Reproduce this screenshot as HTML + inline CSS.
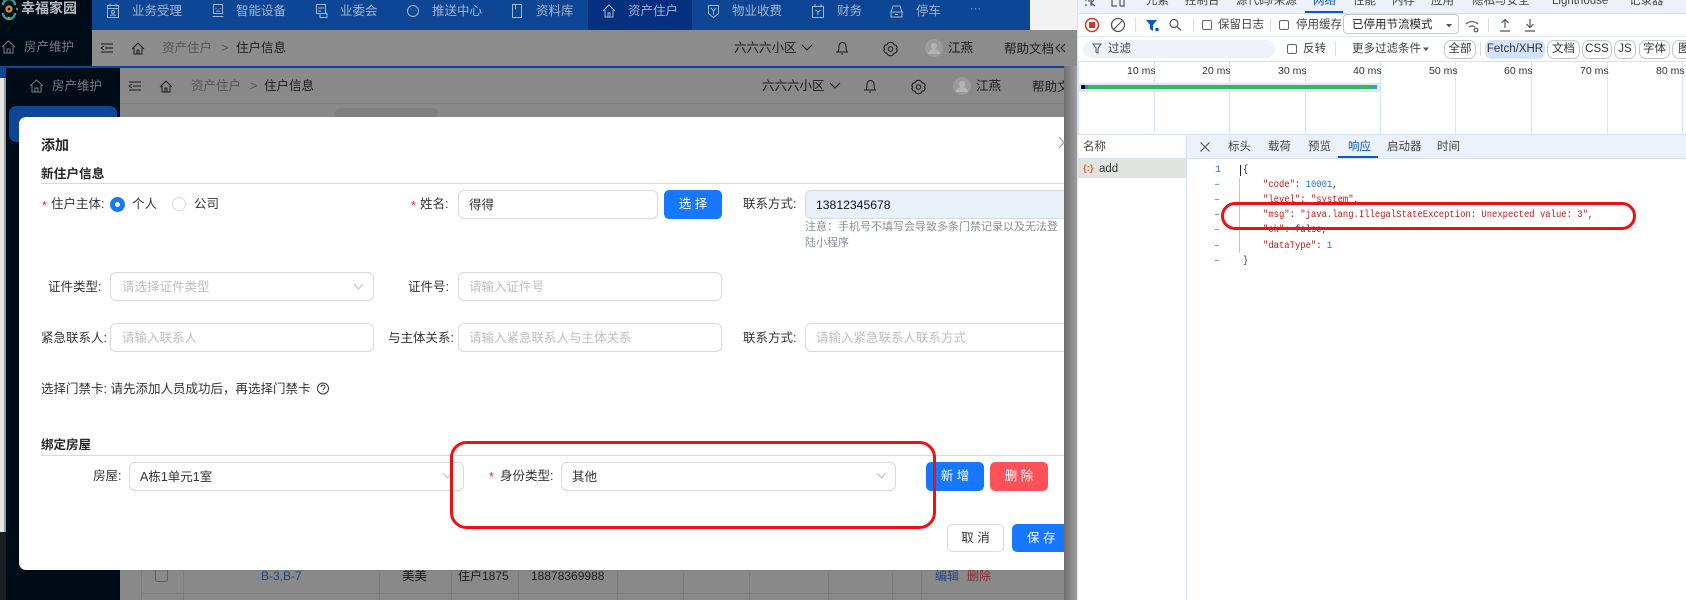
<!DOCTYPE html>
<html lang="zh"><head><meta charset="utf-8"><title>住户信息</title>
<style>
html,body{margin:0;padding:0;width:1686px;height:600px;overflow:hidden;background:#fff}
body{position:relative;font-family:"Liberation Sans","Noto Sans CJK SC",sans-serif;font-size:12.5px;color:#333}
div,span.t{box-sizing:border-box}
.b{position:absolute}
.t{position:absolute;white-space:nowrap;line-height:20px}
.nav{color:#a3b5cf;font-size:12.5px}
.h{color:#1c1c1c;font-size:12.5px}
.g{color:#555}
.f{color:#333}
.p{color:#bfbfbf}
.r{color:#f5222d}
.inp{position:absolute;border:1px solid #d9d9d9;border-radius:6px;background:#fff;height:29px}
.btn{position:absolute;border-radius:5px;color:#fff;text-align:center;line-height:29px;height:29px;font-size:12.5px}
.d{font-size:11.5px;color:#444}
.blue{color:#0b57d0}
.chip{position:absolute;top:40px;height:19px;border:1px solid #c4c7c5;border-radius:7px;text-align:center;line-height:17px;font-size:11.5px;color:#333;background:#fff}
.vl{position:absolute;top:62px;height:72px;width:1px;background:#d3e3fd}
.sep{position:absolute;width:1px;height:14px;background:#d6dde8}
.m{position:absolute;font-family:"Liberation Mono",monospace;font-size:8.9px;line-height:15px;white-space:pre;color:#c41a16;transform:scaleY(1.14)}
.ln{position:absolute;left:1214px;font-family:"Liberation Mono",monospace;font-size:10px;line-height:15px;color:#2a6fc9}
.cb{position:absolute;width:10px;height:10px;border:1px solid #666;border-radius:2px;background:#fff}
</style></head><body>

<!-- back layer -->
<div class="b" style="left:0;top:0;width:1077px;height:600px;background:#f2f2f2"></div>
<div class="b" style="left:0;top:0;width:92px;height:66px;background:#000c17"></div>
<div class="b" style="left:92px;top:0;width:938px;height:30px;background:#0c4694"></div>
<div class="b" style="left:588px;top:0;width:104px;height:30px;background:#04307f"></div>
<div class="b" style="left:92px;top:30px;width:985px;height:36px;background:#8c8c8c"></div>
<div class="b" style="left:0;top:66px;width:6px;height:12px;background:#0c4694"></div>
<div class="b" style="left:0;top:78px;width:4px;height:454px;background:#e6e6e6"></div>
<div class="b" style="left:4px;top:78px;width:2px;height:454px;background:#9a9a9a"></div>
<div class="b" style="left:0;top:532px;width:6px;height:68px;background:#1a1f26"></div>
<div class="t" style="left:21px;top:-2px;font-size:14px;font-weight:700;color:#b5b9bd">幸福家园</div>
<div class="t nav" style="left:132px;top:1px">业务受理</div>
<div class="t nav" style="left:236px;top:1px">智能设备</div>
<div class="t nav" style="left:340px;top:1px">业委会</div>
<div class="t nav" style="left:432px;top:1px">推送中心</div>
<div class="t nav" style="left:536px;top:1px">资料库</div>
<div class="t nav" style="left:628px;top:1px">资产住户</div>
<div class="t nav" style="left:732px;top:1px">物业收费</div>
<div class="t nav" style="left:837px;top:1px">财务</div>
<div class="t nav" style="left:916px;top:1px">停车</div>
<div class="t nav" style="left:970px;top:-1px;font-size:11px">···</div>
<div class="t" style="left:24px;top:37px;color:#777b80">房产维护</div>
<div class="t g" style="left:162px;top:38px">资产住户</div>
<div class="t g" style="left:221px;top:38px">&gt;</div>
<div class="t h" style="left:236px;top:38px">住户信息</div>
<div class="t h" style="left:734px;top:38px">六六六小区</div>
<div class="t h" style="left:948px;top:38px">江燕</div>
<div class="t h" style="left:1004px;top:39px">帮助文档</div>

<!-- shadow -->
<div class="b" style="left:1064px;top:66px;width:13px;height:534px;background:linear-gradient(90deg,#6f6f6f,#8a8a8a 60%,#a0a0a0)"></div>

<!-- inner window -->
<div class="b" style="left:6px;top:66px;width:1058px;height:534px;background:#898989;overflow:hidden">
  <div class="b" style="left:0;top:0;width:1058px;height:2px;background:#0c4694"></div>
  <div class="b" style="left:0;top:2px;width:114px;height:532px;background:#000c17"></div>
  <div class="b" style="left:114px;top:37px;width:944px;height:1px;background:#7e7e7e"></div>
  <div class="b" style="left:3px;top:40px;width:108px;height:36px;background:#0c4694;border-radius:7px"></div>
  <div class="b" style="left:329px;top:42px;width:103px;height:10px;background:#808080;border-radius:5px 5px 0 0"></div>
</div>
<div class="t" style="left:52px;top:76px;color:#777b80">房产维护</div>
<div class="t g" style="left:191px;top:76px">资产住户</div>
<div class="t g" style="left:250px;top:76px">&gt;</div>
<div class="t h" style="left:264px;top:76px">住户信息</div>
<div class="t h" style="left:762px;top:76px">六六六小区</div>
<div class="t h" style="left:976px;top:76px">江燕</div>
<div class="b" style="left:1032px;top:66px;width:32px;height:40px;overflow:hidden"><div class="t h" style="left:0;top:11px">帮助文档</div></div>

<!-- table below modal -->
<div class="b" style="left:141px;top:570px;width:923px;height:1px;background:#7d7d7d"></div>
<div class="b" style="left:141px;top:593px;width:923px;height:1px;background:#7d7d7d"></div>
<div class="b" style="left:141px;top:570px;width:1px;height:30px;background:#7d7d7d"></div>
<div class="b" style="left:183px;top:570px;width:1px;height:30px;background:#7d7d7d"></div>
<div class="b" style="left:379px;top:570px;width:1px;height:30px;background:#7d7d7d"></div>
<div class="b" style="left:451px;top:570px;width:1px;height:30px;background:#7d7d7d"></div>
<div class="b" style="left:518px;top:570px;width:1px;height:30px;background:#7d7d7d"></div>
<div class="b" style="left:617px;top:570px;width:1px;height:30px;background:#7d7d7d"></div>
<div class="b" style="left:683px;top:570px;width:1px;height:30px;background:#7d7d7d"></div>
<div class="b" style="left:749px;top:570px;width:1px;height:30px;background:#7d7d7d"></div>
<div class="b" style="left:828px;top:570px;width:1px;height:30px;background:#7d7d7d"></div>
<div class="b" style="left:892px;top:570px;width:1px;height:30px;background:#7d7d7d"></div>
<div class="b" style="left:921px;top:570px;width:1px;height:30px;background:#7d7d7d"></div>
<div class="b" style="left:155px;top:570px;width:13px;height:12px;border:1px solid #5f5f5f;border-top:none;border-radius:0 0 3px 3px"></div>
<div class="t" style="left:261px;top:566px;color:#1c4a85;font-size:12px">B-3,B-7</div>
<div class="t" style="left:402px;top:566px;color:#1c1c1c">美美</div>
<div class="t" style="left:458px;top:566px;color:#1c1c1c;font-size:12px">住户1875</div>
<div class="t" style="left:531px;top:566px;color:#1c1c1c;font-size:12px">18878369988</div>
<div class="t" style="left:935px;top:566px;color:#1c4a85;font-size:12px">编辑</div>
<div class="t" style="left:967px;top:566px;color:#8e2c30;font-size:12px">删除</div>

<!-- modal -->
<div class="b" style="left:19px;top:117px;width:1045px;height:453px;background:#fff;border-radius:7px 0 0 7px"></div>
<div class="t" style="left:41px;top:135px;font-size:14px;font-weight:700;color:#262626">添加</div>
<div class="t" style="left:41px;top:164px;font-size:12.7px;font-weight:700;color:#262626">新住户信息</div>
<div class="b" style="left:41px;top:183px;width:1023px;height:1px;background:#d9d9d9"></div>

<div class="t r" style="left:42px;top:196px">*</div>
<div class="t f" style="left:51px;top:194px">住户主体:</div>
<div class="b" style="left:110px;top:197px;width:15px;height:15px;border-radius:50%;background:#1677ff"></div>
<div class="b" style="left:115px;top:202px;width:5px;height:5px;border-radius:50%;background:#fff"></div>
<div class="t f" style="left:132px;top:194px">个人</div>
<div class="b" style="left:172px;top:197px;width:14px;height:14px;border-radius:50%;border:1px solid #d9d9d9"></div>
<div class="t f" style="left:194px;top:194px">公司</div>
<div class="t r" style="left:411px;top:196px">*</div>
<div class="t f" style="left:420px;top:194px">姓名:</div>
<div class="inp" style="left:458px;top:190px;width:200px"></div>
<div class="t f" style="left:469px;top:195px;color:#333">得得</div>
<div class="btn" style="left:664px;top:190px;width:58px;background:#1677ff">选 择</div>
<div class="t f" style="left:743px;top:194px">联系方式:</div>
<div class="inp" style="left:805px;top:190px;width:265px;background:#e8f0fa"></div>
<div class="t" style="left:816px;top:195px;font-size:12.2px;color:#111">13812345678</div>
<div class="t" style="left:805px;top:217px;font-size:11px;color:#8a8f99">注意：手机号不填写会导致多条门禁记录以及无法登</div>
<div class="t" style="left:805px;top:233px;font-size:11px;color:#8a8f99">陆小程序</div>

<div class="t f" style="left:48px;top:277px">证件类型:</div>
<div class="inp" style="left:110px;top:272px;width:264px"></div>
<div class="t p" style="left:122px;top:277px">请选择证件类型</div>
<div class="t f" style="left:408px;top:277px">证件号:</div>
<div class="inp" style="left:458px;top:272px;width:264px"></div>
<div class="t p" style="left:469px;top:277px">请输入证件号</div>

<div class="t f" style="left:41px;top:328px">紧急联系人:</div>
<div class="inp" style="left:110px;top:323px;width:264px"></div>
<div class="t p" style="left:122px;top:328px">请输入联系人</div>
<div class="t f" style="left:388px;top:328px">与主体关系:</div>
<div class="inp" style="left:458px;top:323px;width:264px"></div>
<div class="t p" style="left:469px;top:328px">请输入紧急联系人与主体关系</div>
<div class="t f" style="left:743px;top:328px">联系方式:</div>
<div class="inp" style="left:805px;top:323px;width:265px"></div>
<div class="t p" style="left:816px;top:328px">请输入紧急联系人联系方式</div>
<div class="b" style="left:1064px;top:186px;width:13px;height:200px;background:linear-gradient(90deg,#6f6f6f,#8a8a8a 60%,#a0a0a0)"></div>

<div class="t f" style="left:41px;top:379px">选择门禁卡: 请先添加人员成功后，再选择门禁卡</div>

<div class="t" style="left:41px;top:435px;font-weight:700;color:#262626">绑定房屋</div>
<div class="b" style="left:41px;top:455px;width:1023px;height:1px;background:#d9d9d9"></div>
<div class="t f" style="left:93px;top:466px">房屋:</div>
<div class="inp" style="left:129px;top:462px;width:335px"></div>
<div class="t f" style="left:140px;top:467px;font-size:12.5px">A栋1单元1室</div>
<div class="t r" style="left:489px;top:467px">*</div>
<div class="t f" style="left:500px;top:466px">身份类型:</div>
<div class="inp" style="left:561px;top:462px;width:335px"></div>
<div class="t f" style="left:572px;top:467px">其他</div>
<div class="btn" style="left:926px;top:462px;width:58px;background:#1677ff">新 增</div>
<div class="btn" style="left:990px;top:462px;width:58px;background:#ff5159">删 除</div>
<div class="btn" style="left:947px;top:524px;width:57px;height:28px;line-height:26px;border:1px solid #d9d9d9;background:#fff;color:#333">取 消</div>
<div class="btn" style="left:1012px;top:524px;width:52px;height:28px;line-height:28px;background:#1677ff;border-radius:5px 0 0 5px;text-align:left;padding-left:15px">保 存</div>

<!-- devtools -->
<div class="b" style="left:1077px;top:0;width:609px;height:600px;background:#fff;border-left:1px solid #d3e3fd"></div>
<div class="b" style="left:1078px;top:0;width:608px;height:13px;background:#edf1f9"></div>
<div class="t d" style="left:1146px;top:-9px">元素</div>
<div class="t d" style="left:1185px;top:-9px">控制台</div>
<div class="t d" style="left:1236px;top:-9px">源代码/来源</div>
<div class="t d blue" style="left:1313px;top:-9px">网络</div>
<div class="b" style="left:1305px;top:11px;width:38px;height:2px;background:#0b57d0"></div>
<div class="t d" style="left:1353px;top:-9px">性能</div>
<div class="t d" style="left:1392px;top:-9px">内存</div>
<div class="t d" style="left:1431px;top:-9px">应用</div>
<div class="t d" style="left:1472px;top:-9px">隐私与安全</div>
<div class="t d" style="left:1552px;top:-9px">Lighthouse</div>
<div class="t d" style="left:1629px;top:-9px">记录器</div>
<div class="b" style="left:1078px;top:13px;width:608px;height:1px;background:#d3e3fd"></div>

<div class="sep" style="left:1135px;top:18px"></div>
<div class="sep" style="left:1193px;top:18px"></div>
<div class="cb" style="left:1202px;top:20px"></div>
<div class="t d" style="left:1218px;top:15px">保留日志</div>
<div class="sep" style="left:1270px;top:18px"></div>
<div class="cb" style="left:1279px;top:20px"></div>
<div class="t d" style="left:1296px;top:15px">停用缓存</div>
<div class="b" style="left:1343px;top:14px;width:116px;height:20px;border:1px solid #c4c7c5;border-radius:4px"></div>
<div class="t d" style="left:1352px;top:15px;color:#1f1f1f">已停用节流模式</div>
<div class="sep" style="left:1488px;top:18px"></div>
<div class="b" style="left:1078px;top:36px;width:608px;height:1px;background:#e3e9f3"></div>

<div class="b" style="left:1083px;top:40px;width:192px;height:18px;border-radius:9px;background:#eef2fa"></div>
<div class="t d" style="left:1108px;top:39px">过滤</div>
<div class="cb" style="left:1287px;top:44px"></div>
<div class="t d" style="left:1303px;top:39px">反转</div>
<div class="sep" style="left:1335px;top:42px"></div>
<div class="t d" style="left:1352px;top:39px">更多过滤条件</div>
<div class="chip" style="left:1444px;width:32px">全部</div>
<div class="sep" style="left:1480px;top:42px"></div>
<div class="chip" style="left:1485px;width:60px;background:#d3e3fd;border-color:#d3e3fd">Fetch/XHR</div>
<div class="chip" style="left:1547px;width:33px">文档</div>
<div class="chip" style="left:1582px;width:30px">CSS</div>
<div class="chip" style="left:1614px;width:22px">JS</div>
<div class="chip" style="left:1639px;width:31px">字体</div>
<div class="chip" style="left:1672px;width:30px;text-align:left;padding-left:5px">图</div>
<div class="b" style="left:1078px;top:61px;width:608px;height:1px;background:#d3e3fd"></div>

<div class="vl" style="left:1078px"></div><div class="vl" style="left:1154px"></div><div class="vl" style="left:1229px"></div><div class="vl" style="left:1305px"></div><div class="vl" style="left:1380px"></div><div class="vl" style="left:1455px"></div><div class="vl" style="left:1531px"></div><div class="vl" style="left:1607px"></div><div class="vl" style="left:1682px"></div>
<div class="t" style="left:1127px;top:61px;font-size:10.5px;color:#333">10 ms</div>
<div class="t" style="left:1202px;top:61px;font-size:10.5px;color:#333">20 ms</div>
<div class="t" style="left:1278px;top:61px;font-size:10.5px;color:#333">30 ms</div>
<div class="t" style="left:1353px;top:61px;font-size:10.5px;color:#333">40 ms</div>
<div class="t" style="left:1429px;top:61px;font-size:10.5px;color:#333">50 ms</div>
<div class="t" style="left:1504px;top:61px;font-size:10.5px;color:#333">60 ms</div>
<div class="t" style="left:1580px;top:61px;font-size:10.5px;color:#333">70 ms</div>
<div class="t" style="left:1656px;top:61px;font-size:10.5px;color:#333">80 ms</div>
<div class="b" style="left:1079px;top:83px;width:301px;height:9px;background:#dbe8fb"></div>
<div class="b" style="left:1081px;top:85px;width:4px;height:4px;background:#000"></div>
<div class="b" style="left:1085px;top:85px;width:3px;height:4px;background:#1a8fd8"></div>
<div class="b" style="left:1088px;top:85px;width:285px;height:4px;background:#34b85c"></div>
<div class="b" style="left:1373px;top:85px;width:4px;height:4px;background:#4a8fe8"></div>

<div class="b" style="left:1078px;top:134px;width:608px;height:1px;background:#d3e3fd"></div>
<div class="b" style="left:1187px;top:135px;width:499px;height:23px;background:#edf1f9"></div>
<div class="b" style="left:1078px;top:158px;width:608px;height:1px;background:#d3e3fd"></div>
<div class="b" style="left:1186px;top:135px;width:1px;height:465px;background:#d3e3fd"></div>
<div class="t d" style="left:1083px;top:137px">名称</div>
<div class="b" style="left:1078px;top:159px;width:108px;height:19px;background:#e1e3e1"></div>
<div class="t" style="left:1083px;top:159px;font-size:9.5px;font-weight:700;color:#e8663a">{:}</div>
<div class="t" style="left:1099px;top:159px;font-size:11.5px;color:#333">add</div>
<div class="t d" style="left:1228px;top:137px">标头</div>
<div class="t d" style="left:1268px;top:137px">载荷</div>
<div class="t d" style="left:1308px;top:137px">预览</div>
<div class="t d blue" style="left:1348px;top:137px">响应</div>
<div class="b" style="left:1338px;top:156px;width:40px;height:2px;background:#0b57d0"></div>
<div class="t d" style="left:1387px;top:137px">启动器</div>
<div class="t d" style="left:1437px;top:137px">时间</div>

<div class="ln" style="left:1215px;top:163px">1</div>
<div class="ln" style="top:178px">–</div><div class="ln" style="top:193px">–</div><div class="ln" style="top:208px">–</div><div class="ln" style="top:223px">–</div><div class="ln" style="top:239px">–</div><div class="ln" style="top:254px">–</div>
<div class="b" style="left:1239px;top:178px;width:1px;height:75px;background:#a8c7fa"></div>
<div class="b" style="left:1240px;top:165px;width:1px;height:11px;background:#222"></div>
<div class="m" style="left:1243px;top:163px;color:#333">{</div>
<div class="m" style="left:1263px;top:178px">"code"<span style="color:#333">: </span><span style="color:#1a6fd8">10001</span><span style="color:#333">,</span></div>
<div class="m" style="left:1263px;top:193px">"level"<span style="color:#333">: </span>"system"<span style="color:#333">,</span></div>
<div class="m" style="left:1263px;top:208px">"msg"<span style="color:#333">: </span>"java.lang.IllegalStateException: Unexpected value: 3"<span style="color:#333">,</span></div>
<div class="m" style="left:1263px;top:223px">"ok"<span style="color:#333">: </span><span style="color:#333">false,</span></div>
<div class="m" style="left:1263px;top:239px">"dataType"<span style="color:#333">: </span><span style="color:#1a6fd8">1</span></div>
<div class="m" style="left:1243px;top:254px;color:#333">}</div>

<!-- icons + annotations -->
<svg class="b" style="left:0;top:0" width="1686" height="600" viewBox="0 0 1686 600" fill="none">
  <!-- logo -->
  <g stroke-width="2.4" fill="none">
    <path d="M3 5a6 6 0 0 1 12 0" stroke="#2f9d8f"/>
    <path d="M3 13a6 6 0 0 0 12 0" stroke="#2f9d8f"/>
    <circle cx="9" cy="9" r="2.5" stroke="#c98a2f"/>
    <path d="M9 17v3" stroke="#c98a2f"/>
    <path d="M16 9h2" stroke="#2f9d8f"/>
  </g>
  <!-- top nav icons -->
  <g stroke="#a3b5cf" stroke-width="1">
    <path d="M107.500 5.500h11v12h-11zM107.500 8.500h11M110 3.500v3M116 3.500v3M113 10.500a1.500 1.500 0 0 1 0 3 1.500 1.500 0 0 1 0-3M110.500 16c.5-1.500 4.500-1.500 5 0"/>
    <path d="M213.500 4.500h9v9h-9zM212.500 16.500h11M215.500 8.500h1M219.500 8.500h1M216 11h4"/>
    <path d="M316.500 4.500h9v9h-9zM318 8h6M318 11h3M320 17.500h7v-4h-7z"/>
    <circle cx="413" cy="11" r="5.500"/><path d="M411 10h0.500M415 10h0.500"/>
    <path d="M512.500 4.500h9v13h-9zM515.500 4.500v5"/>
    <path d="M603 11l6-6 6 6M605 10v7h8v-7M608 17v-4h2v4"/>
    <path d="M708.500 5.500h10v8l-5 4-5-4zM711 8l2.500 3 2.500-3M713.500 11v4"/>
    <path d="M812.500 6.500h11v11h-11zM815 4v3M821 4v3M815.500 10l2.500 2 2.500-2M818 12v3"/>
    <path d="M891 12l2-6h7l2 6v5h-11zM891 12h12M895 14.500h3"/>
  </g>
  <!-- sidebar home icons -->
  <g stroke="#777b80" stroke-width="1">
    <path d="M2 47l6.500-6 6.500 6M4 46v7h9v-7M7 53v-4h3v4"/>
    <path d="M30 86l6.500-6 6.500 6M32 85v7h9v-7M35 92v-4h3v4"/>
  </g>
  <!-- headers -->
  <g stroke="#1c1c1c" stroke-width="1" stroke-linejoin="round">
    <path d="M101 44h12M105 48h8M101 52h12M104 46l-3 2 3 2"/>
    <path d="M132 49l6-6 6 6M134 48v6h8v-6M137 54v-4h2v4"/>
    <path d="M802 45l5 5 5-5"/>
    <path d="M838 52c1-2 1-4 1-6a3.500 3.500 0 0 1 7 0c0 2 0 4 1 6zM836 52h12M841 54h2"/>
    <circle cx="890.500" cy="49" r="2.300"/>
    <path d="M888 43l2.500-.8 2.500.8 1 1.800 2 .4 1.300 2.400-1 1.400 1 1.400-1.300 2.400-2 .4-1 1.800-2.500.8-2.500-.8-1-1.800-2-.4-1.300-2.400 1-1.400-1-1.400 1.300-2.400 2-.4z"/>
    <path d="M1060 44l-4 4 4 4M1065 44l-4 4 4 4"/>

    <path d="M129 82h12M133 86h8M129 90h12M132 84l-3 2 3 2"/>
    <path d="M160 87l6-6 6 6M162 86v6h8v-6M165 92v-4h2v4"/>
    <path d="M830 83l5 5 5-5"/>
    <path d="M866 90c1-2 1-4 1-6a3.500 3.500 0 0 1 7 0c0 2 0 4 1 6zM864 90h12M869 92h2"/>
    <circle cx="918.500" cy="87" r="2.300"/>
    <path d="M916 81l2.500-.8 2.500.8 1 1.800 2 .4 1.300 2.400-1 1.400 1 1.400-1.300 2.400-2 .4-1 1.800-2.500.8-2.500-.8-1-1.800-2-.4-1.300-2.400 1-1.400-1-1.400 1.300-2.400 2-.4z"/>
  </g>
  <!-- avatars -->
  <circle cx="934" cy="48" r="9" fill="#9b9b9b"/><circle cx="934" cy="46" r="3" fill="#b5b5b5"/><path d="M928 54a6 5 0 0 1 12 0z" fill="#b5b5b5"/>
  <circle cx="962" cy="86" r="9" fill="#9b9b9b"/><circle cx="962" cy="84" r="3" fill="#b5b5b5"/><path d="M956 92a6 5 0 0 1 12 0z" fill="#b5b5b5"/>
  <!-- modal close + chevrons -->
  <path d="M1059 137l5 5.500-5 5.500" stroke="#999" stroke-width="1"/>
  <g stroke="#bfbfbf" stroke-width="1">
    <path d="M354 284l4.500 5 4.500-5"/>
    <path d="M443 473l4.500 5 4.500-5"/>
    <path d="M877 473l4.500 5 4.500-5"/>
  </g>
  <!-- help -->
  <circle cx="323" cy="388.500" r="5.500" stroke="#333"/>
  <path d="M321 387a2 2 0 1 1 3 1.700c-.7.400-1 .8-1 1.300M323 391.200v.8" stroke="#333" stroke-width=".9"/>
  <!-- devtools toolbar -->
  <g stroke="#555" stroke-width="1.200">
    <path d="M1086 0v1M1086 4v2M1089 0v2M1091 0v6M1091 3l4 3M1094 0l-3 3M1112 0v6h5M1120 0v6M1124 0v6h-4"/>
    <circle cx="1118" cy="25" r="6.500" stroke-width="1.300"/><path d="M1113.500 29.500l9-9"/>
    <circle cx="1174" cy="23.500" r="4"/><path d="M1177 26.500l4 4"/>
    <path d="M1500 31h10M1505 20v8M1501.500 23l3.500-3.500 3.500 3.500"/>
    <path d="M1525 31h10M1530 19v8M1526.500 24l3.500 3.500 3.500-3.500"/>
    <path d="M1466 24a9 9 0 0 1 12 0M1469 27a5 5 0 0 1 6 0"/><circle cx="1476" cy="30" r="1.800"/>
    <path d="M1093 44h8l-3 4v5l-2-1v-4z" stroke-width="1"/>
    <path d="M1200.500 142.500l9 9M1209.500 142.500l-9 9"/>
  </g>
  <circle cx="1092" cy="25" r="6.500" stroke="#d93025" stroke-width="1.500"/>
  <rect x="1089" y="22" width="6" height="6" fill="#d93025"/>
  <path d="M1146 20h11l-4 5v6l-3-2v-4z" fill="#0b57d0"/><circle cx="1157" cy="29.500" r="1.800" fill="#0b57d0"/>
  <path d="M1446 24l3 3.500 3-3.500z" fill="#555"/>
  <path d="M1423 47.500l3 3.500 3-3.500z" fill="#555"/>
  <!-- red annotation rings -->
  <rect x="451.500" y="442.500" width="483" height="85" rx="15" stroke="#f01010" stroke-width="3"/>
  <rect x="1222.500" y="203.500" width="412" height="25" rx="12.500" stroke="#f01010" stroke-width="3"/>
</svg>
</body></html>
